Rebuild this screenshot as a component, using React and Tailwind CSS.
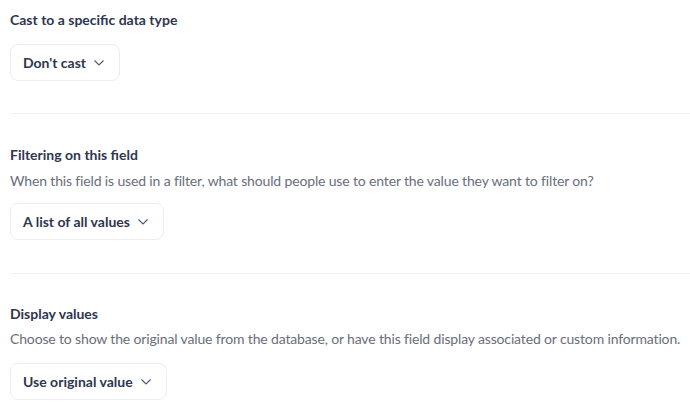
import React from 'react';

const Chevron = () => (
  <svg width="10" height="6" viewBox="0 0 10 6" fill="none" className="ml-2 mt-[1px]">
    <path d="M0.5 0.5l4.5 4.5L9.5 0.5" stroke="#4c5773" strokeWidth="1.1" />
  </svg>
);

const Select = ({ label }) => (
  <button className="flex items-center h-[37px] pl-3 pr-[15px] border border-[#ecedf0] rounded-lg bg-white text-[14px] font-bold text-[#2e3650]">
    {label}
    <Chevron />
  </button>
);

const Title = ({ children }) => (
  <div className="text-[14px] font-bold text-[#2e3650] leading-[20px]">{children}</div>
);

const Desc = ({ children, className }) => (
  <div className={`text-[14px] text-[#696e7b] leading-[20px] tracking-[-0.15px] whitespace-nowrap ${className}`}>{children}</div>
);

const App = () => {
  return (
    <div className="pl-[10px] bg-white min-h-screen" style={{ fontFamily: 'Lato, "Noto Sans", sans-serif' }}>
      <div className="pt-[10px] pb-[32px] border-b border-[#f0f0f2]">
        <Title>Cast to a specific data type</Title>
        <div className="mt-[14px]">
          <Select label="Don't cast" />
        </div>
      </div>

      <div className="pt-[31px] pb-[33px] border-b border-[#f0f0f2]">
        <Title>Filtering on this field</Title>
        <Desc className="mt-[6px]">
          When this field is used in a filter, what should people use to enter the value they want to filter on?
        </Desc>
        <div className="mt-[12px]">
          <Select label="A list of all values" />
        </div>
      </div>

      <div className="pt-[30px]">
        <Title>Display values</Title>
        <Desc className="mt-[5px]">
          Choose to show the original value from the database, or have this field display associated or custom information.
        </Desc>
        <div className="mt-[14px]">
          <Select label="Use original value" />
        </div>
      </div>
    </div>
  );
};

export default App;
